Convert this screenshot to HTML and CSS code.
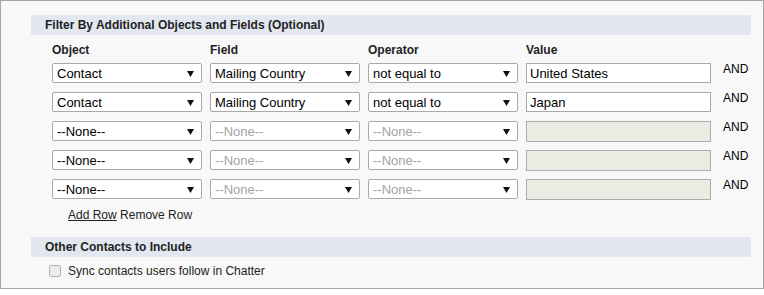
FILE: index.html
```html
<!DOCTYPE html>
<html lang="en">
<head>
    <meta charset="UTF-8">
    <title>Filter By Additional Objects and Fields</title>
    <link rel="stylesheet" href="styles.css">
</head>
<body>

<div class="filter-panel">
    <div class="section-header">Filter By Additional Objects and Fields (Optional)</div>

    <div class="filter-table">
        <div class="col-title">Object</div>
        <div class="col-title">Field</div>
        <div class="col-title">Operator</div>
        <div class="col-title">Value</div>
        <div></div>

        <!-- row 1 -->
        <div class="pick"><span>Contact</span><svg class="arrow" width="7" height="6"><polygon points="0,0 7,0 3.5,6"/></svg></div>
        <div class="pick"><span>Mailing Country</span><svg class="arrow" width="7" height="6"><polygon points="0,0 7,0 3.5,6"/></svg></div>
        <div class="pick"><span>not equal to</span><svg class="arrow" width="7" height="6"><polygon points="0,0 7,0 3.5,6"/></svg></div>
        <input class="value-box" value="United States">
        <div class="and-label">AND</div>

        <!-- row 2 -->
        <div class="pick"><span>Contact</span><svg class="arrow" width="7" height="6"><polygon points="0,0 7,0 3.5,6"/></svg></div>
        <div class="pick"><span>Mailing Country</span><svg class="arrow" width="7" height="6"><polygon points="0,0 7,0 3.5,6"/></svg></div>
        <div class="pick"><span>not equal to</span><svg class="arrow" width="7" height="6"><polygon points="0,0 7,0 3.5,6"/></svg></div>
        <input class="value-box" value="Japan">
        <div class="and-label">AND</div>

        <!-- row 3 -->
        <div class="pick"><span>--None--</span><svg class="arrow" width="7" height="6"><polygon points="0,0 7,0 3.5,6"/></svg></div>
        <div class="pick off"><span>--None--</span><svg class="arrow" width="7" height="6"><polygon points="0,0 7,0 3.5,6"/></svg></div>
        <div class="pick off"><span>--None--</span><svg class="arrow" width="7" height="6"><polygon points="0,0 7,0 3.5,6"/></svg></div>
        <input class="value-box" disabled>
        <div class="and-label">AND</div>

        <!-- row 4 -->
        <div class="pick"><span>--None--</span><svg class="arrow" width="7" height="6"><polygon points="0,0 7,0 3.5,6"/></svg></div>
        <div class="pick off"><span>--None--</span><svg class="arrow" width="7" height="6"><polygon points="0,0 7,0 3.5,6"/></svg></div>
        <div class="pick off"><span>--None--</span><svg class="arrow" width="7" height="6"><polygon points="0,0 7,0 3.5,6"/></svg></div>
        <input class="value-box" disabled>
        <div class="and-label">AND</div>

        <!-- row 5 -->
        <div class="pick"><span>--None--</span><svg class="arrow" width="7" height="6"><polygon points="0,0 7,0 3.5,6"/></svg></div>
        <div class="pick off"><span>--None--</span><svg class="arrow" width="7" height="6"><polygon points="0,0 7,0 3.5,6"/></svg></div>
        <div class="pick off"><span>--None--</span><svg class="arrow" width="7" height="6"><polygon points="0,0 7,0 3.5,6"/></svg></div>
        <input class="value-box" disabled>
        <div class="and-label">AND</div>
    </div>

    <div class="row-links">
        <a href="#" class="add-row">Add Row</a> <span>Remove Row</span>
    </div>

    <div class="section-header second">Other Contacts to Include</div>

    <label class="check-line">
        <span class="check-box"></span>
        <span>Sync contacts users follow in Chatter</span>
    </label>
</div>

</body>
</html>
```

FILE: styles.css
```css
body {
    margin: 0;
    background: #ffffff;
    font-family: "Liberation Sans", Arial, sans-serif;
    font-size: 12px;
    color: #222222;
}

.filter-panel {
    width: 764px;
    border: 1px solid #a6a6a6;
    background: #f8f8f8;
    padding: 14px 12px 10px 30px;
    box-sizing: border-box;
    height: 289px;
}

.section-header {
    height: 20px;
    line-height: 20px;
    background: #e3e7f0;
    padding-left: 14px;
    font-weight: bold;
    color: #222222;
}

.section-header.second {
    margin-top: 15px;
}

.filter-table {
    margin-left: 21px;
    display: grid;
    grid-template-columns: 150px 150px 150px 185px auto;
    grid-template-rows: 19px;
    grid-auto-rows: 20px;
    column-gap: 8px;
    row-gap: 9px;
}

.col-title {
    font-weight: bold;
    line-height: 14px;
    padding-top: 8px;
    height: 19px;
    box-sizing: border-box;
    overflow: visible;
}

.pick {
    display: flex;
    align-items: center;
    justify-content: space-between;
    border: 1px solid #a9a9a9;
    border-radius: 2px;
    background: #ffffff;
    padding: 0 7px 0 4px;
    font-size: 13px;
    color: #000000;
    box-sizing: border-box;
    height: 20px;
}

.pick.off {
    color: #a3a3a3;
}

.arrow {
    fill: #111111;
    margin-top: 1px;
}

.value-box {
    height: 20px;
    box-sizing: border-box;
    border: 1px solid #a9a9a9;
    padding: 0 3px;
    margin: 0;
    font-family: "Liberation Sans", Arial, sans-serif;
    font-size: 13px;
    color: #000000;
    background: #ffffff;
    outline: none;
}

.value-box:disabled {
    background: #ebebe4;
    border-color: #acacac;
    height: 21px;
}

.and-label {
    margin-left: 4px;
    line-height: 12px;
    color: #000000;
}

.row-links {
    margin-top: 9px;
    margin-left: 37px;
    line-height: 14px;
}

.add-row {
    color: #222222;
    text-decoration: underline;
}

.check-line {
    display: flex;
    align-items: center;
    margin-top: 7px;
    margin-left: 18px;
    line-height: 14px;
}

.check-box {
    width: 12px;
    height: 12px;
    border: 1px solid #b5b5b5;
    border-radius: 2px;
    background: #ececec;
    margin-right: 7px;
    box-sizing: border-box;
    flex-shrink: 0;
}
```
